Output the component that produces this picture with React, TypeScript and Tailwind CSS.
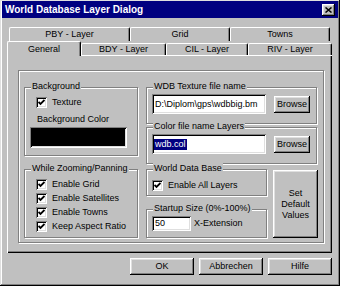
import React from "react";

const raised =
  "shadow-[inset_-1px_-1px_0_#000,inset_1px_1px_0_#fff,inset_-2px_-2px_0_#808080,inset_2px_2px_0_#dfdfdf]";
const sunken =
  "shadow-[inset_1px_1px_0_#808080,inset_-1px_-1px_0_#fff,inset_2px_2px_0_#000,inset_-2px_-2px_0_#dfdfdf]";
const etched = "border border-[#808080] shadow-[inset_1px_1px_0_#fff,1px_1px_0_#fff]";
const tabEdge =
  "border-t border-l border-white border-r border-r-black shadow-[inset_-1px_0_0_#808080] rounded-tl-[2px] rounded-tr-[2px]";

function Group({ label, className, children }: { label: string; className: string; children?: React.ReactNode }) {
  return (
    <div className={`relative ${etched} ${className}`}>
      <span className="absolute -top-[7px] left-[6px] bg-[#c0c0c0] px-[1px] leading-[11px] whitespace-nowrap">
        {label}
      </span>
      {children}
    </div>
  );
}

function Check() {
  return (
    <span className={`w-[11px] h-[11px] bg-white ${sunken} flex items-center justify-center shrink-0`}>
      <svg width="7" height="7" viewBox="0 0 7 7">
        <path d="M0.5 3 L2.5 5 L6.5 1" stroke="#000" strokeWidth="1.8" fill="none" />
      </svg>
    </span>
  );
}

function CheckRow({ label, className }: { label: string; className?: string }) {
  return (
    <div className={`flex items-center h-[13px] gap-[5px] ${className ?? ""}`}>
      <Check />
      <span className="leading-[11px] whitespace-nowrap">{label}</span>
    </div>
  );
}

function Button({ className, children }: { className: string; children: React.ReactNode }) {
  return (
    <div className={`bg-[#c0c0c0] ${raised} flex items-center justify-center text-center leading-[11px] shrink-0 ${className}`}>
      {children}
    </div>
  );
}

export default function App() {
  return (
    <div
      className={`w-[340px] h-[286px] bg-[#c0c0c0] flex flex-col pt-[1px] px-[2px] text-[9px] text-black font-[family-name:'Liberation_Sans',Arial,sans-serif] shadow-[inset_-1px_-1px_0_#000,inset_1px_1px_0_#dfdfdf,inset_-2px_-2px_0_#808080,inset_2px_2px_0_#fff]`}
    >
      {/* title bar */}
      <div className="h-[17px] bg-[#000080] flex items-center justify-between pl-[3px] pr-[3px]">
        <span className="text-white font-bold text-[10px] leading-[12px]">World Database Layer Dialog</span>
        <div className={`w-[13px] h-[12px] bg-[#c0c0c0] ${raised} flex items-center justify-center`}>
          <svg width="7" height="6" viewBox="0 0 7 6">
            <path d="M0.5 0.5 L6.5 5.5 M6.5 0.5 L0.5 5.5" stroke="#000" strokeWidth="1.5" />
          </svg>
        </div>
      </div>

      {/* tabs, back row */}
      <div className="mt-[9px] ml-[7px] w-[321px] h-[14px] flex">
        <div className={`w-[121px] ${tabEdge} flex items-center justify-center leading-[11px]`}>PBY - Layer</div>
        <div className={`w-[100px] ${tabEdge} flex items-center justify-center leading-[11px]`}>Grid</div>
        <div className={`w-[100px] ${tabEdge} flex items-center justify-center leading-[11px]`}>Towns</div>
      </div>

      {/* tabs, front row */}
      <div className="ml-[5px] w-[325px] h-[14px] flex items-end">
        <div className={`w-[74px] h-[15px] -mb-[1px] relative z-10 bg-[#c0c0c0] ${tabEdge} flex items-center justify-center leading-[11px]`}>
          General
        </div>
        <div className={`w-[85px] h-[12px] ${tabEdge} flex items-center justify-center leading-[11px]`}>BDY - Layer</div>
        <div className={`w-[82px] h-[12px] ${tabEdge} flex items-center justify-center leading-[11px]`}>CIL - Layer</div>
        <div className={`w-[84px] h-[12px] ${tabEdge} flex items-center justify-center leading-[11px]`}>RIV - Layer</div>
      </div>

      {/* tab page */}
      <div className="ml-[5px] w-[325px] h-[198px] shadow-[inset_1px_1px_0_#fff,inset_-1px_-1px_0_#000,inset_-2px_-2px_0_#808080] pt-[15px] pl-[11px]">
        <div className={`w-[306px] h-[173px] ${etched} pt-[16px] pl-[5px] flex gap-[8px]`}>
          {/* left column */}
          <div className="w-[114px] flex flex-col gap-[13px] shrink-0">
            <Group label="Background" className="h-[69px] pt-[8px] pl-[11px]">
              <CheckRow label="Texture" />
              <div className="mt-[5px] pl-[1px] leading-[11px]">Background Color</div>
              <div className={`mt-[2px] -ml-[6px] w-[97px] h-[21px] bg-black ${sunken}`} />
            </Group>
            <Group label="While Zooming/Panning" className="h-[69px] pt-[8px] pl-[11px] flex flex-col gap-[1px]">
              <CheckRow label="Enable Grid" />
              <CheckRow label="Enable Satellites" />
              <CheckRow label="Enable Towns" />
              <CheckRow label="Keep Aspect Ratio" />
            </Group>
          </div>

          {/* right column */}
          <div className="w-[171px] flex flex-col shrink-0">
            <Group label="WDB Texture file name" className="h-[37px] pt-[6px] pl-[5px] flex items-start gap-[8px]">
              <div className={`w-[114px] h-[20px] bg-white ${sunken} flex items-center pl-[3px] overflow-hidden whitespace-nowrap leading-[11px]`}>
                {"D:\\Diplom\\gps\\wdbbig.bm"}
              </div>
              <Button className="w-[36px] h-[17px] mt-[2px]">Browse</Button>
            </Group>
            <Group label="Color file name Layers" className="mt-[3px] h-[37px] pt-[6px] pl-[5px] flex items-start gap-[8px]">
              <div className={`w-[114px] h-[20px] bg-white ${sunken} flex items-center pl-[2px] overflow-hidden whitespace-nowrap`}>
                <span className="bg-[#000080] text-white px-[1px] h-[11px] leading-[11px]">wdb.col</span>
              </div>
              <Button className="w-[36px] h-[17px] mt-[2px]">Browse</Button>
            </Group>

            <div className="mt-[5px] flex gap-[6px]">
              <div className="w-[121px] flex flex-col gap-[13px] shrink-0">
                <Group label="World Data Base" className="h-[27px] pt-[9px] pl-[5px]">
                  <CheckRow label="Enable All Layers" className="gap-[4px]" />
                </Group>
                <Group label="Startup Size (0%-100%)" className="h-[29px] pt-[6px] pl-[5px] flex items-start gap-[3px]">
                  <div className={`w-[39px] h-[15px] bg-white ${sunken} flex items-center pl-[3px] leading-[11px]`}>50</div>
                  <span className="leading-[15px]">X-Extension</span>
                </Group>
              </div>
              <Button className="w-[45px] h-[68px] mt-[1px] flex-col">
                <span>Set</span>
                <span>Default</span>
                <span>Values</span>
              </Button>
            </div>
          </div>
        </div>
      </div>

      {/* dialog buttons */}
      <div className="mt-[5px] pr-[6px] flex justify-end gap-[5px]">
        <Button className="w-[64px] h-[17px]">OK</Button>
        <Button className="w-[64px] h-[17px]">Abbrechen</Button>
        <Button className="w-[64px] h-[17px]">Hilfe</Button>
      </div>
    </div>
  );
}
